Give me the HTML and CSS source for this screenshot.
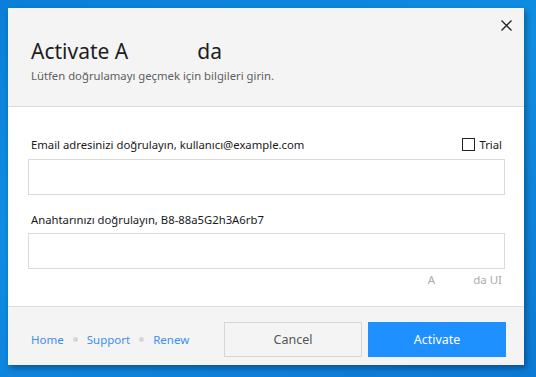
FILE: index.html
```html
<!DOCTYPE html>
<html lang="tr">
<head>
  <meta charset="UTF-8">
  <title>Activate</title>
  <link rel="stylesheet" href="styles.css">
</head>
<body>
  <div class="dialog">
    <div class="header">
      <h2>Activate A<span class="gap-lg"></span>da</h2>
      <p class="sub">Lütfen doğrulamayı geçmek için bilgileri girin.</p>
      <button class="close" aria-label="Close">
        <svg width="11" height="11" viewBox="0 0 11 11"><path d="M0.5 0.5 L10.5 10.5 M10.5 0.5 L0.5 10.5" stroke="#222" stroke-width="1.3" fill="none"/></svg>
      </button>
    </div>

    <div class="body">
      <div class="label-row">
        <label>Email adresinizi doğrulayın, kullanıcı@example.com</label>
        <label class="trial"><span class="box"></span>Trial</label>
      </div>
      <input type="text" class="field">

      <div class="label-row second">
        <label>Anahtarınızı doğrulayın, B8-88a5G2h3A6rb7</label>
      </div>
      <input type="text" class="field">

      <div class="brand">A<span class="gap-sm"></span>da UI</div>
    </div>

    <div class="footer">
      <nav class="links">
        <a href="#">Home</a>
        <span class="dot"></span>
        <a href="#">Support</a>
        <span class="dot"></span>
        <a href="#">Renew</a>
      </nav>
      <button class="btn cancel">Cancel</button>
      <button class="btn primary">Activate</button>
    </div>
  </div>
</body>
</html>
```

FILE: styles.css
```css
body {
  margin: 0;
  height: 377px;
  overflow: hidden;
  padding: 8px 0 0 8px;
  box-sizing: border-box;
  font-family: "Noto Sans", "Open Sans", sans-serif;
  background: linear-gradient(160deg, #0a7fd8 0%, #0f8ee3 40%, #0b7ad6 100%);
}
.dialog {
  width: 516px;
  height: 357px;
  display: flex;
  flex-direction: column;
  box-shadow: 2px 3px 6px rgba(0,0,0,0.35);
}
.header {
  position: relative;
  height: 99px;
  background: #f4f4f4;
  border-bottom: 1px solid #dcdcdc;
  padding: 28px 23px 0;
  box-sizing: border-box;
}
h2 {
  margin: 0;
  font-size: 21px;
  font-weight: 400;
  line-height: 30px;
  color: #1e1e1e;
}
.gap-lg {
  display: inline-block;
  width: 69px;
}
.sub {
  margin: 2px 0 0;
  font-size: 11.3px;
  color: #5f5f5f;
}
.close {
  position: absolute;
  top: 12px;
  right: 12px;
  width: 11px;
  height: 11px;
  padding: 0;
  border: 0;
  background: none;
}
.close svg {
  display: block;
}
.body {
  flex: 1;
  background: white;
  padding: 27px 19px 0 20px;
}
.label-row {
  display: flex;
  justify-content: space-between;
  align-items: center;
  font-size: 11.3px;
  color: #1a1a1a;
  padding: 0 3px;
  height: 20px;
  margin-bottom: 5px;
}
.label-row.second {
  margin-top: 14px;
  margin-bottom: 4px;
}
.trial {
  display: flex;
  align-items: center;
}
.box {
  width: 11px;
  height: 11px;
  border: 1px solid #222;
  margin-right: 4px;
}
.field {
  display: block;
  width: 100%;
  height: 36px;
  box-sizing: border-box;
  border: 1px solid #dadada;
  margin: 0;
}
.brand {
  text-align: right;
  font-size: 11.5px;
  color: #aaa;
  padding: 3px 3px 0;
}
.gap-sm {
  display: inline-block;
  width: 38px;
}
.footer {
  height: 59px;
  background: #f4f4f4;
  border-top: 1px solid #dcdcdc;
  box-sizing: border-box;
  display: flex;
  align-items: flex-start;
  padding: 15px 18px 0 23px;
}
.links {
  display: flex;
  align-items: center;
  height: 35px;
  flex: 1;
  font-size: 11.5px;
}
.links a {
  color: #3d8ef2;
  text-decoration: none;
}
.dot {
  width: 5px;
  height: 5px;
  border-radius: 50%;
  background: #d6d6d6;
  margin: 0 9px;
}
.btn {
  width: 138px;
  height: 35px;
  font-family: inherit;
  font-size: 12.5px;
  border: 1px solid #d6d6d6;
}
.cancel {
  background: #f4f4f4;
  color: #555;
  margin-right: 6px;
}
.primary {
  background: #1e90ff;
  border-color: #1e90ff;
  color: white;
}
```
